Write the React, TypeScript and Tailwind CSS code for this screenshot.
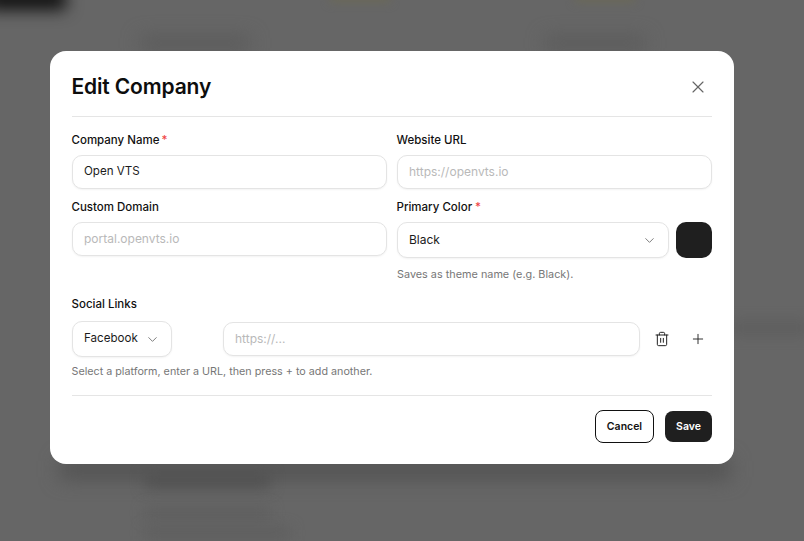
import { ChevronDown, Plus, Trash2, X } from "lucide-react";

function Label({ children, req, gap = "ml-[2px]" }: { children: string; req?: boolean; gap?: string }) {
  return (
    <div className="ml-[-0.5px] h-[16px] text-[11.5px] leading-[16px] font-medium text-[#111111]">
      {children}
      {req && <span className={`${gap} text-[#ef4444]`}>*</span>}
    </div>
  );
}

function Field({ value, placeholder, className = "" }: { value?: string; placeholder?: string; className?: string }) {
  return (
    <div
      className={`flex h-[34px] items-center rounded-[10px] border border-[#e4e4e4] bg-white px-[11px] shadow-[0_1px_2px_rgba(0,0,0,0.05)] ${
        value ? "text-[11.6px] text-[#1c1c1c]" : "text-[12px] text-[#b9b9b9]"
      } ${className}`}
    >
      {value ?? placeholder}
    </div>
  );
}

export default function App() {
  return (
    <div className="relative flex h-[541px] w-[804px] items-start overflow-hidden bg-[#666666] pl-[50px] pt-[51px] font-['Inter',sans-serif]">
      <div className="absolute left-[-14px] top-[-12px] h-[22px] w-[80px] bg-[#111111] blur-[8px]" />
      <div className="absolute left-[140px] top-[36px] h-[14px] w-[110px] bg-[#5b5b5b] blur-[9px]" />
      <div className="absolute left-[545px] top-[36px] h-[14px] w-[100px] bg-[#5b5b5b] blur-[9px]" />
      <div className="absolute left-[330px] top-[-6px] h-[8px] w-[60px] bg-[#6b6956] blur-[5px]" />
      <div className="absolute left-[575px] top-[-6px] h-[8px] w-[60px] bg-[#6b6956] blur-[5px]" />
      <div className="absolute left-[60px] top-[460px] h-[18px] w-[670px] bg-[#505050] blur-[10px]" />
      <div className="absolute left-[145px] top-[472px] h-[16px] w-[125px] bg-[#525252] blur-[7px]" />
      <div className="absolute left-[145px] top-[508px] h-[10px] w-[125px] bg-[#5d5d5d] blur-[7px]" />
      <div className="absolute left-[145px] top-[528px] h-[10px] w-[145px] bg-[#5d5d5d] blur-[7px]" />
      <div className="absolute left-[730px] top-[322px] h-[12px] w-[80px] bg-[#5d5d5d] blur-[7px]" />

      <div className="relative h-[413px] w-[684px] rounded-[16px] bg-white px-[22px]">
        <div className="flex h-[66px] items-center justify-between border-b border-[#e5e5e5] pt-[6px]">
          <div className="ml-[-0.5px] text-[21px] leading-[28px] font-semibold tracking-[-0.15px] text-[#0d0d0d]">Edit Company</div>
          <X className="mr-[4px] h-[20px] w-[20px] text-[#666666]" strokeWidth={1.4} />
        </div>

        <div className="grid grid-cols-[315px_315px] gap-x-[10px] pt-[15px]">
          <div>
            <Label req>Company Name</Label>
            <Field className="mt-[7px]" value="Open VTS" />
          </div>
          <div>
            <Label>Website URL</Label>
            <Field className="mt-[7px]" placeholder="https://openvts.io" />
          </div>
          <div className="pt-[10px]">
            <Label>Custom Domain</Label>
            <Field className="mt-[7px]" placeholder="portal.openvts.io" />
          </div>
          <div className="pt-[10px]">
            <Label req gap="ml-[3px]">Primary Color</Label>
            <div className="mt-[7px] flex gap-[7px]">
              <div className="flex h-[36px] w-[272px] items-center justify-between rounded-[10px] border border-[#e4e4e4] bg-white pl-[11px] pr-[11px] text-[12px] text-[#1c1c1c] shadow-[0_1px_2px_rgba(0,0,0,0.05)]">
                Black
                <ChevronDown className="h-[15px] w-[15px] text-[#666666]" strokeWidth={1.35} />
              </div>
              <div className="h-[36px] w-[36px] rounded-[10px] bg-[#1f1f1f]" />
            </div>
            <div className="mt-[9px] h-[14px] text-[10.85px] leading-[14px] text-[#777777]">Saves as theme name (e.g. Black).</div>
          </div>
        </div>

        <div className="pt-[15px]">
          <Label>Social Links</Label>
          <div className="mt-[9px] flex items-center">
            <div className="flex h-[36px] w-[100px] items-center gap-[7px] rounded-[10px] border border-[#e4e4e4] bg-white pl-[11px] text-[11.6px] text-[#1c1c1c] shadow-[0_1px_2px_rgba(0,0,0,0.05)]">
              Facebook
              <ChevronDown className="h-[15px] w-[15px] text-[#666666]" strokeWidth={1.35} />
            </div>
            <Field className="ml-[51px] w-[417px]" placeholder="https://..." />
            <Trash2 className="ml-[14px] h-[16px] w-[16px] text-[#222222]" strokeWidth={1.5} />
            <Plus className="ml-[20px] h-[16px] w-[16px] text-[#222222]" strokeWidth={1.4} />
          </div>
          <div className="ml-[-0.5px] mt-[8px] h-[14px] text-[10.75px] leading-[14px] text-[#777777]">
            Select a platform, enter a URL, then press + to add another.
          </div>
        </div>

        <div className="mt-[16px] flex items-center justify-end gap-[11px] border-t border-[#e5e5e5] pt-[14px]">
          <div className="flex h-[33px] w-[59px] items-center justify-center rounded-[8px] border border-[#111111] bg-white text-[10.5px] font-semibold text-[#111111]">
            Cancel
          </div>
          <div className="flex h-[31px] w-[47px] items-center justify-center rounded-[8px] bg-[#1f1f1f] text-[10.5px] font-semibold text-white">
            Save
          </div>
        </div>
      </div>
    </div>
  );
}
